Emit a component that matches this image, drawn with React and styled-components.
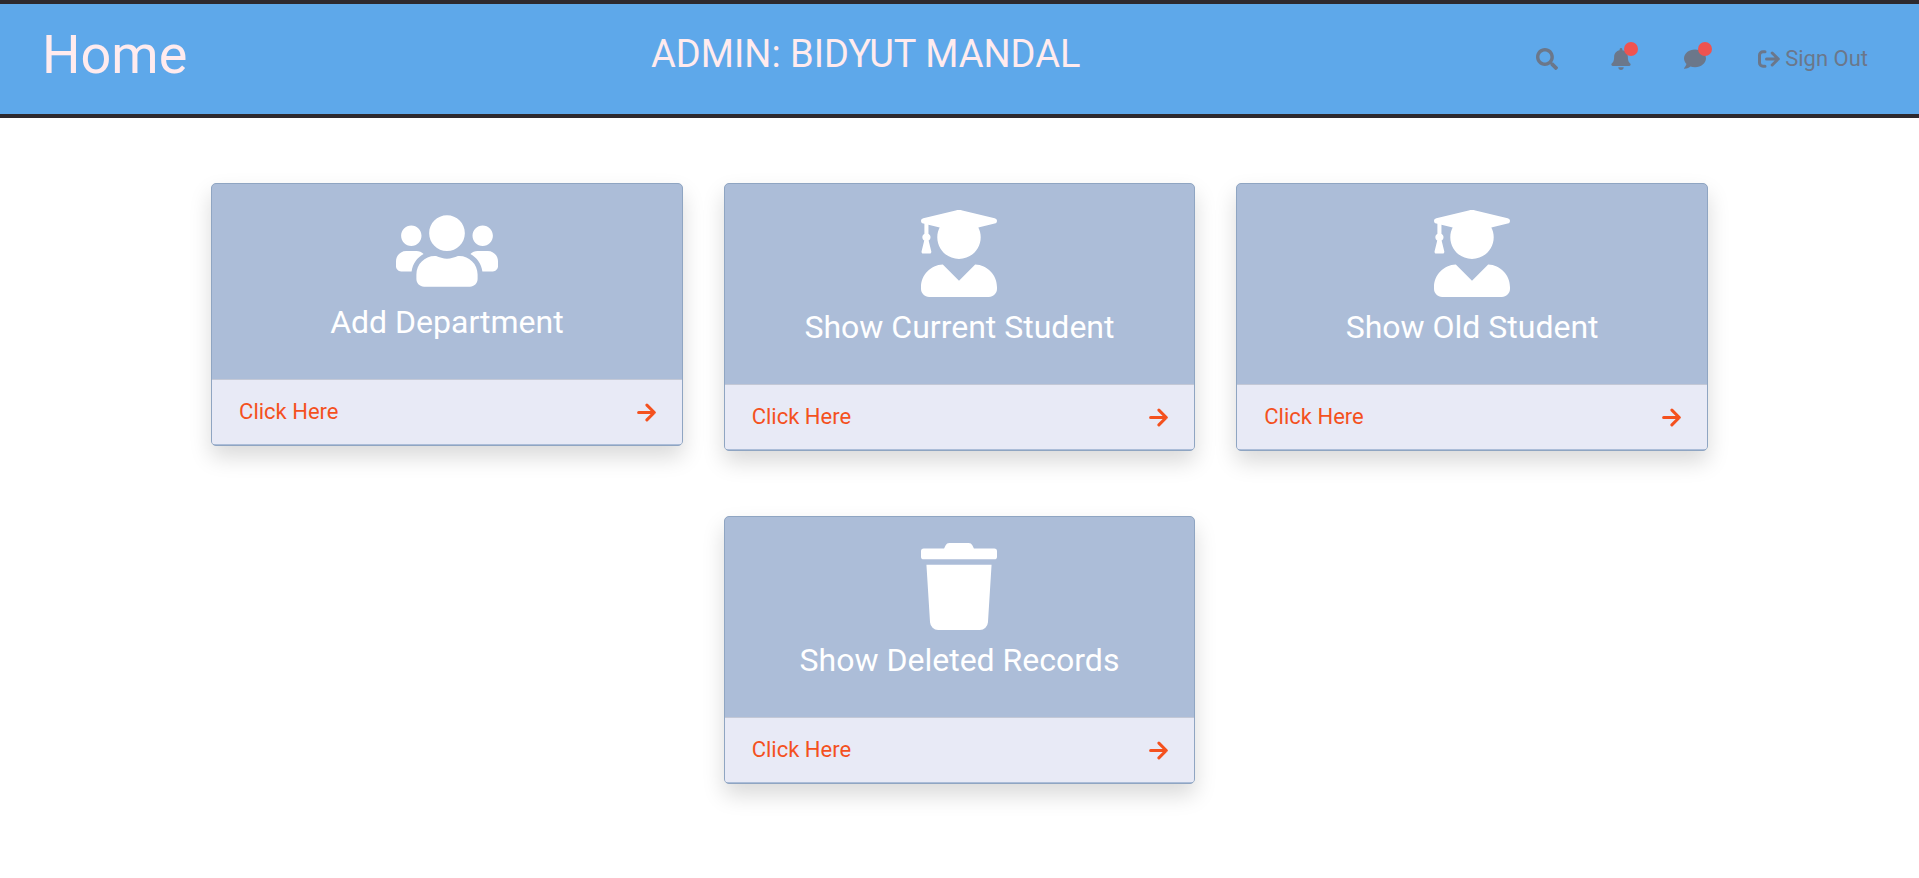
import React from "react";
import styled, { createGlobalStyle } from "styled-components";
import { FaUsers, FaUserGraduate, FaTrash, FaSearch, FaBell, FaComment } from "react-icons/fa";

const GlobalStyle = createGlobalStyle`
  *, *::before, *::after { box-sizing: border-box; }
  body {
    margin: 0;
    background: #ffffff;
    font-family: Roboto, "Liberation Sans", sans-serif;
    font-weight: 400;
  }
  h1, h2, h3 { margin: 0; font-weight: 400; }
`;

const Header = styled.header`
  display: flex;
  align-items: center;
  justify-content: space-between;
  height: 118px;
  padding: 0 51px 0 42px;
  background: #5ea8ea;
  border-top: 4px solid #2d292e;
  border-bottom: 4px solid #2d292e;
  color: #ffebee;
`;

const Brand = styled.h1`
  font-size: 54px;
  line-height: 64px;
  padding-bottom: 8px;
`;

const AdminName = styled.h2`
  font-size: 38px;
  line-height: 46px;
  padding: 0 0 10px 8px;
`;

const Nav = styled.nav`
  display: flex;
  align-items: center;
  gap: 52px;
  color: #6b778a;
`;

const IconButton = styled.button`
  position: relative;
  display: flex;
  padding: 0;
  border: 0;
  background: none;
  color: inherit;
  font-size: 22px;
  cursor: pointer;
`;

const Badge = styled.span`
  position: absolute;
  top: -6px;
  right: -6px;
  width: 14px;
  height: 14px;
  border-radius: 50%;
  background: #ef5350;
`;

const SignOut = styled.a`
  display: flex;
  align-items: center;
  gap: 5px;
  color: inherit;
  font-size: 22px;
  line-height: 32px;
  text-decoration: none;
`;

const LineIcon = styled.svg`
  fill: none;
  stroke: currentColor;
  stroke-width: 3;
  stroke-linecap: round;
  stroke-linejoin: round;
`;

const Main = styled.main`
  display: grid;
  grid-template-columns: repeat(3, 1fr);
  align-items: start;
  gap: 65px 41px;
  padding: 65px 11%;
`;

const Card = styled.article`
  grid-column: ${({ $column }) => $column};
  padding-bottom: 1px;
  overflow: hidden;
  border: 1px solid #8fa5c2;
  border-radius: 5px;
  background: #acbdd8;
  box-shadow: 0 11px 22px rgba(0, 0, 0, 0.15);
`;

const CardBody = styled.div`
  display: flex;
  flex-direction: column;
  align-items: center;
  gap: 11px;
  padding: 26px 26px 38px;
  color: #ffffff;

  svg {
    width: ${({ $wide }) => ($wide ? 102 : 76)}px;
    height: ${({ $wide }) => ($wide ? 82 : 87)}px;
  }
`;

const CardTitle = styled.h3`
  font-size: 32px;
  line-height: 38px;
`;

const CardLink = styled.a`
  display: flex;
  align-items: center;
  justify-content: space-between;
  padding: 16px 26px 16px 27px;
  border-top: 1px solid #c3c8d6;
  background: #e8eaf6;
  color: #f4511e;
  font-size: 22px;
  line-height: 32px;
  text-decoration: none;
`;

function ArrowIcon() {
  return (
    <LineIcon width="19" height="19" viewBox="0 0 19 19" aria-hidden="true">
      <path d="M1.6 9.5H17M9.9 2.1L17.3 9.5L9.9 16.9" />
    </LineIcon>
  );
}

function SignOutIcon() {
  return (
    <LineIcon width="22" height="18" viewBox="0 0 22 18" aria-hidden="true">
      <path d="M7 1.7H5A3.5 3.5 0 0 0 1.5 5.2V12.8A3.5 3.5 0 0 0 5 16.3H7M8.5 9H20M14.2 3L20.3 9L14.2 15" />
    </LineIcon>
  );
}

const cards = [
  { title: "Add Department", Icon: FaUsers, wide: true, column: 1 },
  { title: "Show Current Student", Icon: FaUserGraduate, column: 2 },
  { title: "Show Old Student", Icon: FaUserGraduate, column: 3 },
  { title: "Show Deleted Records", Icon: FaTrash, column: 2 },
];

export default function App() {
  return (
    <>
      <GlobalStyle />
      <Header>
        <Brand>Home</Brand>
        <AdminName>ADMIN: BIDYUT MANDAL</AdminName>
        <Nav>
          <IconButton type="button" aria-label="Search"><FaSearch /></IconButton>
          <IconButton type="button" aria-label="Notifications"><FaBell /><Badge /></IconButton>
          <IconButton type="button" aria-label="Messages"><FaComment /><Badge /></IconButton>
          <SignOut href="#sign-out"><SignOutIcon />Sign Out</SignOut>
        </Nav>
      </Header>
      <Main>
        {cards.map(({ title, Icon, wide, column }) => (
          <Card key={title} $column={column}>
            <CardBody $wide={wide}>
              <Icon />
              <CardTitle>{title}</CardTitle>
            </CardBody>
            <CardLink href="#open">Click Here<ArrowIcon /></CardLink>
          </Card>
        ))}
      </Main>
    </>
  );
}
